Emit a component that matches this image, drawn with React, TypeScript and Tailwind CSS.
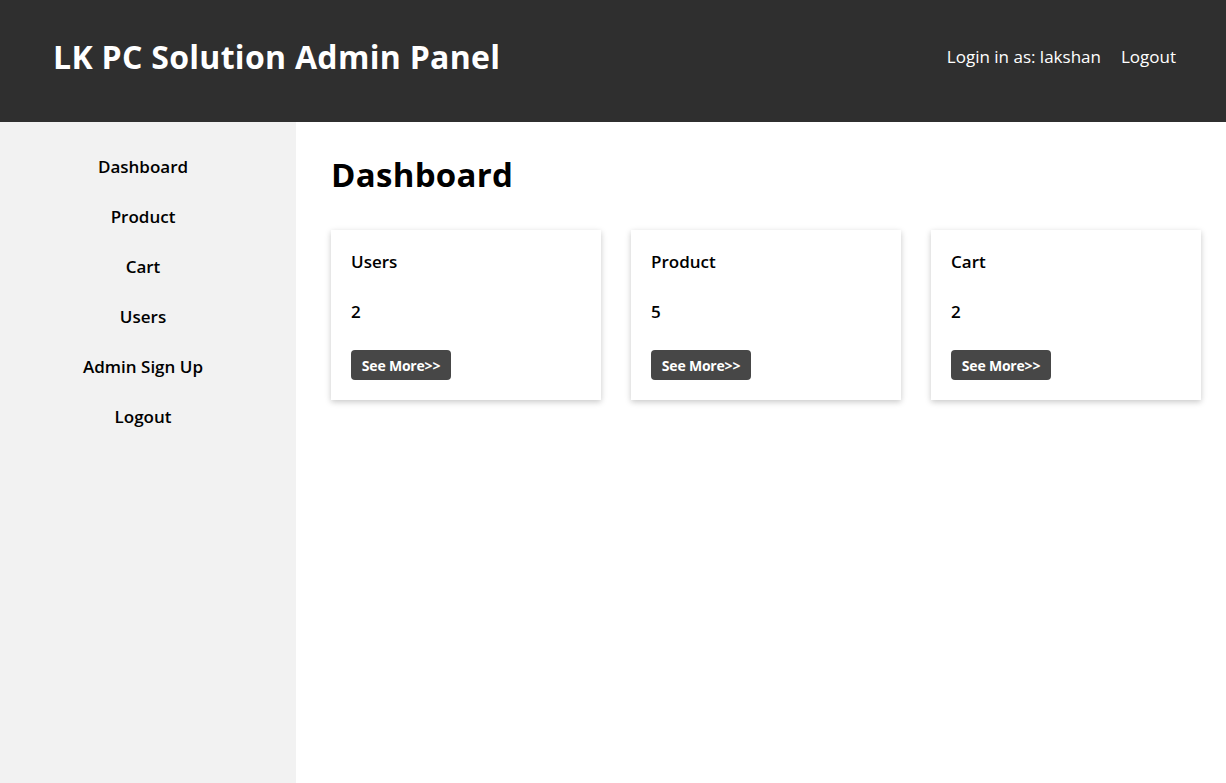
import React from "react";

const font = { fontFamily: '"Open Sans", "Liberation Sans", sans-serif' };

function Card({ title, value }: { title: string; value: string }) {
  return (
    <div className="w-[270px] h-[170px] bg-white shadow-[0_2px_6px_rgba(0,0,0,0.22)] px-5 pt-[22px] flex flex-col">
      <div className="text-[17px] font-semibold leading-[20px] text-black">{title}</div>
      <div className="mt-[30px] text-[17px] font-semibold leading-[20px] text-black">{value}</div>
      <button className="mt-[28px] w-[100px] h-[30px] rounded-[4px] bg-[#474747] text-white text-[14px] font-bold tracking-[-0.2px] flex items-center justify-center">
        See More&gt;&gt;
      </button>
    </div>
  );
}

export default function App() {
  const nav = ["Dashboard", "Product", "Cart", "Users", "Admin Sign Up", "Logout"];
  return (
    <div style={font} className="w-[1226px] h-[783px] flex flex-col overflow-hidden">
      <header className="h-[122px] bg-[#2f2f2f] flex items-center justify-between pl-[53px] pr-[50px] pb-[8px] shrink-0">
        <h1 className="text-white text-[32px] font-bold tracking-[0.3px] leading-[40px]">LK PC Solution Admin Panel</h1>
        <div className="flex items-center gap-5 text-white text-[17px]">
          <span>Login in as: lakshan</span>
          <span>Logout</span>
        </div>
      </header>
      <div className="flex flex-1">
        <aside className="w-[296px] bg-[#f2f2f2] pt-[20px] pr-[10px] flex flex-col items-center">
          {nav.map((n) => (
            <div key={n} className="h-[50px] flex items-center justify-center text-[17px] font-semibold text-black">
              {n}
            </div>
          ))}
        </aside>
        <main className="flex-1 bg-white pl-[35px] pt-[33px]">
          <h2 className="text-[33px] font-bold text-black leading-[40px] tracking-[0.3px]">Dashboard</h2>
          <div className="mt-[35px] flex gap-[30px]">
            <Card title="Users" value="2" />
            <Card title="Product" value="5" />
            <Card title="Cart" value="2" />
          </div>
        </main>
      </div>
    </div>
  );
}
